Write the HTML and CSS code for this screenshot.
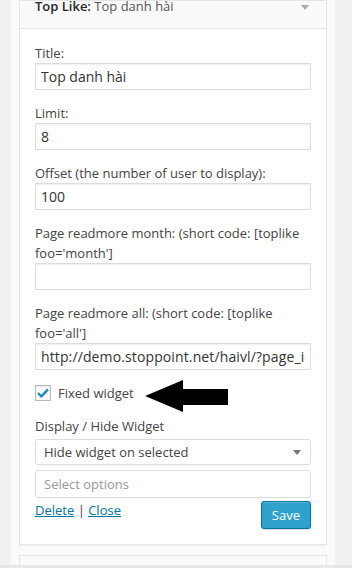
FILE: index.html
```html
<!DOCTYPE html>
<html lang="en">
<head>
  <meta charset="UTF-8" />
  <meta name="viewport" content="width=device-width, initial-scale=1.0" />
  <title>Widgets – Top Like</title>
  <link rel="stylesheet" href="styles.css">
</head>
<body>
<div class="page">
  <div class="sidebar">

    <!-- ── Top Like widget ───────────────────────── -->
    <div class="widget">
      <div class="widget-top">
        <span class="widget-title"><strong>Top Like:</strong> <span class="in-title">Top danh hài</span></span>
        <span class="toggle"></span>
      </div>

      <div class="widget-inside">
        <p>
          <label>Title:</label>
          <input class="widefat" type="text" value="Top danh hài" />
        </p>
        <p>
          <label>Limit:</label>
          <input class="widefat" type="text" value="8" />
        </p>
        <p>
          <label>Offset (the number of user to display):</label>
          <input class="widefat" type="text" value="100" />
        </p>
        <p>
          <label>Page readmore month: (short code: [toplike foo='month']</label>
          <input class="widefat" type="text" value="" />
        </p>
        <p>
          <label>Page readmore all: (short code: [toplike foo='all']</label>
          <input class="widefat url" type="text" value="http://demo.stoppoint.net/haivl/?page_id=12" />
        </p>
        <p class="check-row">
          <span class="checkbox">
            <svg width="12" height="10" viewBox="0 0 12 10"><path d="M1 5.2 L4.4 8.4 L11 1.4" fill="none" stroke="#1e8cbe" stroke-width="2.4"/></svg>
          </span>
          <span class="check-label">Fixed widget</span>
          <svg class="pointer" width="84" height="32" viewBox="0 0 84 32"><polygon points="0,16 38,0 38,9 83,9 83,25 38,25 38,32" fill="#000"/></svg>
        </p>
        <p>
          <label>Display / Hide Widget</label>
          <span class="select">Hide widget on selected<span class="caret"></span></span>
          <span class="chosen">Select options</span>
        </p>

        <div class="actions">
          <div class="links"><a href="#">Delete</a> | <a href="#">Close</a></div>
          <button class="button-primary">Save</button>
        </div>
      </div>
    </div>

    <!-- ── next widget (cut off) ─────────────────── -->
    <div class="widget next">
      <div class="widget-top empty"></div>
    </div>

  </div>
</div>
<div class="edge"></div>
</body>
</html>
```

FILE: styles.css
```css
html,body{margin:0;padding:0;background:#f1f1f1;color:#444;font-family:'Open Sans',sans-serif;font-size:13px;}
.page{height:565px;overflow:hidden;}
.edge{height:3px;background:#e8e8e8;}
.sidebar{margin-left:11px;width:308px;height:565px;padding:0 8px;background:#fafafa;}

.widget{background:#fff;border:1px solid #e5e5e5;box-shadow:0 1px 1px rgba(0,0,0,.04);}
.widget-top{display:flex;justify-content:space-between;background:#fafafa;padding:0 15px 17px 15px;line-height:10px;color:#23282d;}
.widget-title strong{font-weight:600;}
.in-title{color:#555;}
.toggle{width:0;height:0;margin:4px 2px 0 0;border-left:4px solid transparent;border-right:4px solid transparent;border-top:5px solid #aaa;}
.widget-inside{border-top:1px solid #e5e5e5;padding:1px 15px 15px 15px;}
.widget-inside p{margin:13px 0;}
.widget-inside label{display:block;line-height:20px;}

.widefat{display:block;box-sizing:border-box;width:100%;height:27px;margin:0;padding:0 5px;border:1px solid #ddd;background:#fff;box-shadow:inset 0 1px 2px rgba(0,0,0,.07);font-family:'Open Sans',sans-serif;font-size:14px;color:#333;}
.widefat.url{letter-spacing:.12px;}

.widget-inside .check-row{position:relative;display:flex;align-items:center;height:20px;}
.checkbox{box-sizing:border-box;width:16px;height:16px;border:1px solid #b4b9be;background:#fff;display:flex;align-items:center;justify-content:center;box-shadow:inset 0 1px 2px rgba(0,0,0,.1);}
.check-label{margin-left:7px;}
.pointer{position:absolute;left:110px;top:-3px;}

.select{display:flex;justify-content:space-between;align-items:center;box-sizing:border-box;height:26px;margin-top:3px;padding:0 9px 0 8px;border:1px solid #ddd;border-radius:3px;background:#fff;color:#444;box-shadow:0 1px 1px rgba(0,0,0,.04);}
.caret{width:0;height:0;border-left:4px solid transparent;border-right:4px solid transparent;border-top:5px solid #777;}
.chosen{display:block;box-sizing:border-box;height:28px;margin-top:5px;padding:0 8px;line-height:26px;border:1px solid #ddd;border-radius:3px;background:#fff;color:#999;}

.actions{display:flex;justify-content:space-between;align-items:flex-start;margin-top:-10px;}
.links{line-height:20px;margin-top:-1px;}
.links a{color:#0074a2;}
.button-primary{height:28px;padding:0 10px;border:1px solid #0074a2;border-radius:3px;background:#2ea2cc;color:#fff;font-family:'Open Sans',sans-serif;font-size:13px;box-shadow:inset 0 1px 0 rgba(120,200,230,.5),0 1px 0 rgba(0,0,0,.15);cursor:pointer;}

.next{margin-top:10px;}
.widget-top.empty{height:40px;padding:0;}
```
